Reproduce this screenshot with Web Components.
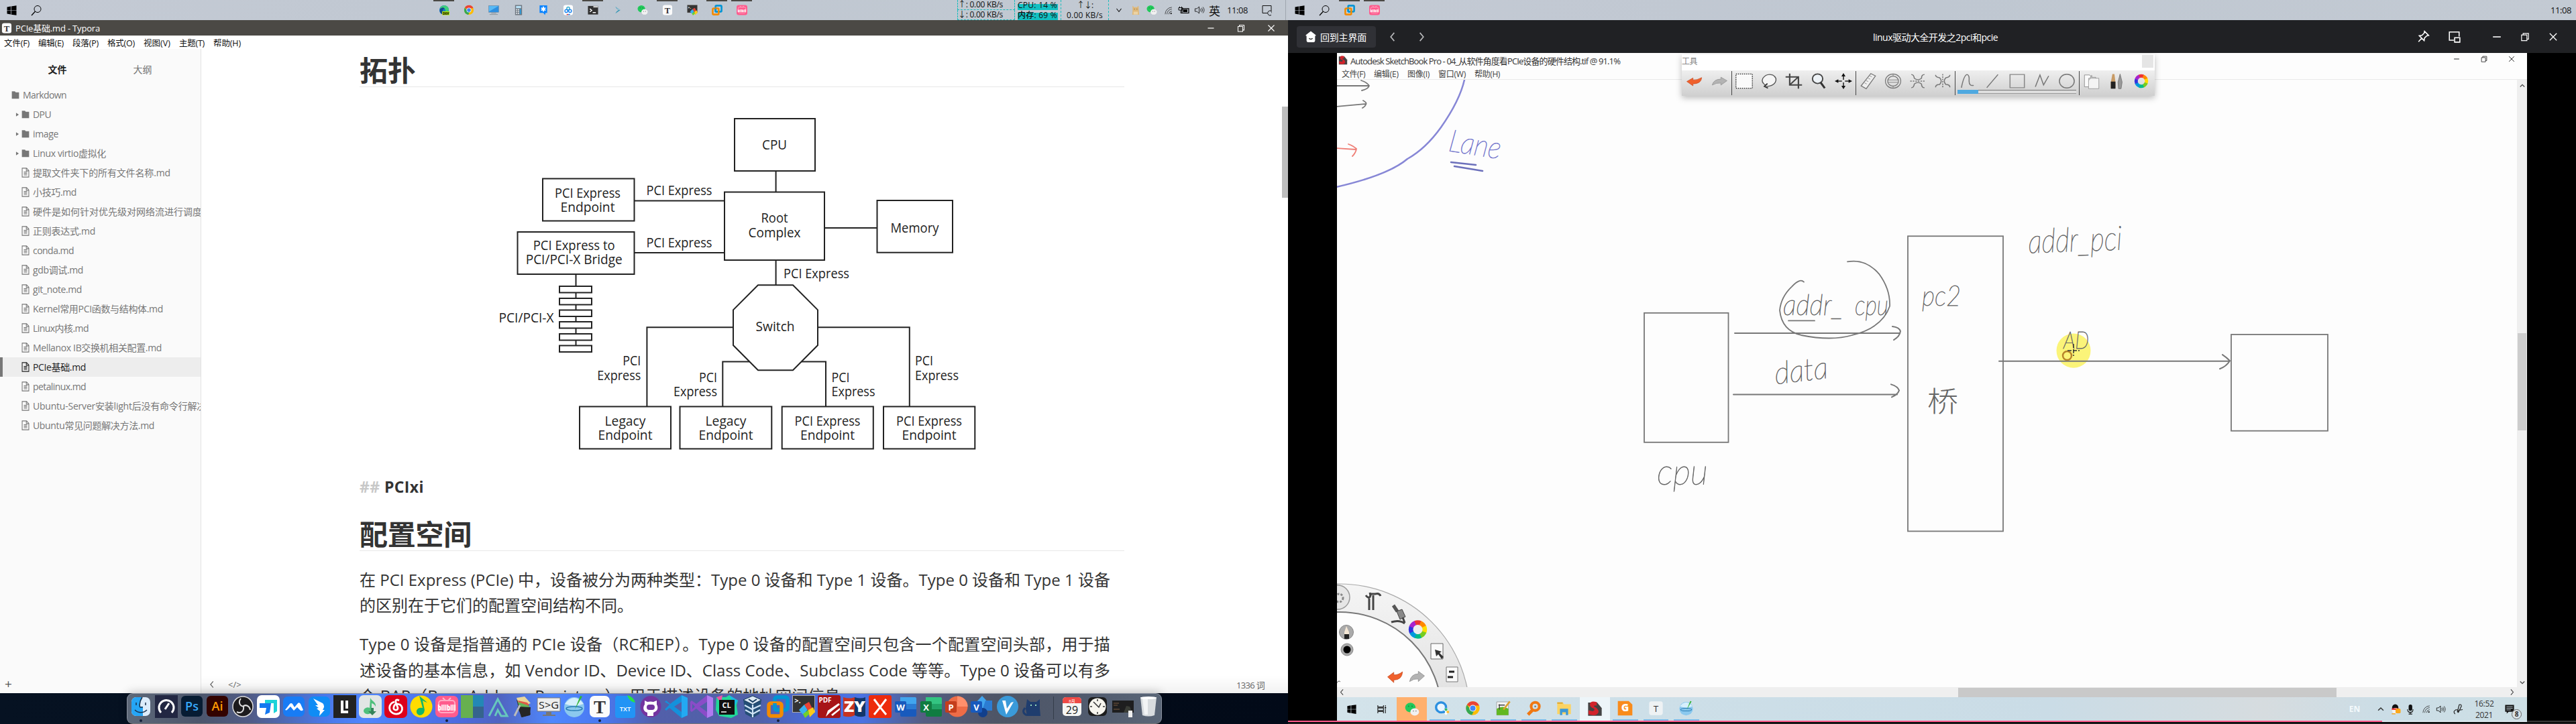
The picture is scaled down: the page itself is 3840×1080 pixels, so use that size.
<!DOCTYPE html>
<html lang="zh-CN">
<head>
<meta charset="utf-8">
<title>Desktop</title>
<style>
html,body{margin:0;padding:0;background:#000}
body{width:3840px;height:1080px;overflow:hidden;font-family:"Open Sans","Noto Sans CJK SC",sans-serif}
</style>
</head>
<body>
<desk-top></desk-top>
<script>
const UI='"Open Sans","Noto Sans CJK SC",sans-serif';
function define(name,html,after){
  customElements.define(name,class extends HTMLElement{
    connectedCallback(){
      if(this.shadowRoot)return;
      const t=document.createElement('template');
      t.innerHTML=typeof html==='function'?html(this):html;
      this.attachShadow({mode:'open'}).appendChild(t.content.cloneNode(true));
      if(after)after(this);
    }
  });
}

/* Inline text whose tracking is adjusted so that it takes w pixels. */
define('fit-text','<style>:host{display:inline-block;white-space:pre;flex:none}</style><span><slot></slot></span>',el=>{
  const w=+el.getAttribute('w');
  const n=[...el.textContent].length;
  const s=el.shadowRoot.querySelector('span');
  const nat=s.getBoundingClientRect().width;
  if(w&&nat){s.style.letterSpacing=((w-nat)/n)+'px';el.style.width=w+'px';}
});

const T=(x,y,s,f,t,e='')=>`<text x="${x}" y="${y}" font-size="${s}" fill="${f}" text-anchor="middle" ${e}>${t}</text>`;
const R=(f,x=2,y=1,w=30,h=32,r=7)=>`<rect x="${x}" y="${y}" width="${w}" height="${h}" rx="${r}" fill="${f}"/>`;
const ring=(cx,cy,r,w)=>{const c=['#e33','#f80','#fd0','#7c2','#0b8','#09d','#33d','#a2c'];let o='';for(let i=0;i<8;i++){const a=i*Math.PI/4-2,b=a+Math.PI/4+.05;o+=`<path d="M${cx+r*Math.cos(a)} ${cy+r*Math.sin(a)}A${r} ${r} 0 0 1 ${cx+r*Math.cos(b)} ${cy+r*Math.sin(b)}" stroke="${c[i]}" stroke-width="${w}" fill="none"/>`}return o};
const office=(c1,c2,c3,l)=>`<path d="M9 3h22a2 2 0 0 1 2 2v9H9z" fill="${c1}"/><path d="M9 13h24v9H9z" fill="${c2}"/><path d="M9 21h24v9a2 2 0 0 1-2 2H11a2 2 0 0 1-2-2z" fill="${c3}"/><rect x="1" y="9" width="17" height="17" rx="2" fill="${c3}"/>${T(9.5,22.5,13,'#fff',l,'font-weight="700"')}`;
const I={
win:'<path d="M3 7l11-2v11.3H3zM15.5 4.800L31 2.500v13.800H15.500zM3 17.700h11V29L3 27.200zM15.500 17.700H31v14L15.500 29.300z" fill="#000"/>',
find:'<circle cx="20" cy="13" r="10" fill="none" stroke="#000" stroke-width="2"/><path d="M13 20L2 32" stroke="#000" stroke-width="2.500"/>',
edge:'<circle cx="17" cy="17" r="15" fill="#1479c8"/><path d="M4 11C8 0 29-1 32 14c1 7-7 9-11 6 3-7-6-10-13-4z" fill="#3fd07b"/><path d="M5 13c7-7 14-4 14 1-8-2-9 8 1 15C9 34 0 24 5 13z" fill="#114a8b"/><rect x="11" y="21" width="23" height="12" fill="#b8f000"/>'+T(22.5,31,10,'#111','DEV','font-weight="800"'),
chrome:'<circle cx="17" cy="17" r="15" fill="#fbbc05"/><path d="M17 17L4 9.500A15 15 0 0 1 31 11H17z" fill="#ea4335"/><path d="M4 9.500a15 15 0 0 0 11 22.400L21 20l-10-2z" fill="#34a853"/><circle cx="17" cy="17" r="7.500" fill="#fff"/><circle cx="17" cy="17" r="6" fill="#4285f4"/>',
pc:'<rect x="1" y="3" width="32" height="21" fill="#2d8fe0" stroke="#7a8894"/><path d="M2 4h30L2 22z" fill="#57b9f5"/><path d="M9 27h16M4 31h26" stroke="#8a949c" stroke-width="2"/>',
calc:'<rect x="6" y="1" width="22" height="32" fill="#6e7780"/><rect x="9" y="4" width="16" height="7" fill="#b7e0f5"/><path d="M9 14h4v4H9zm6 0h4v4h-4zM9 20h4v4H9zm6 0h4v4h-4zM9 26h4v4H9zm6 0h4v4h-4z" fill="#dfe4e8"/><path d="M21 14h4v16h-4z" fill="#2e9ad8"/>',
star:'<path d="M5 2h24v24h-5l-2 7-5-7H5z" fill="#0a84ff"/><path d="M17 6v16M10 10l14 8M24 10l-14 8" stroke="#fff" stroke-width="4"/>',
baidu:R('#fff')+'<g fill="none" stroke-width="3"><circle cx="17" cy="12" r="4.500" stroke="#3ac"/><circle cx="11" cy="20" r="4.500" stroke="#28e"/><circle cx="23" cy="20" r="4.500" stroke="#28e"/></g><path d="M12 31h5" stroke="#e33" stroke-width="3"/><path d="M17 31h6" stroke="#28e" stroke-width="3"/>',
term:'<rect x="1" y="4" width="32" height="27" fill="#303030"/><path d="M18 4h15v5H18z" fill="#ccc"/><path d="M7 13l6 5-6 5M16 25h10" stroke="#fff" stroke-width="3" fill="none"/>',
arrowt:'<path d="M9 6l16 11L9 28l4-6 6-5-6-5z" fill="#3697b5"/><path d="M9 6l16 11-6 0z" fill="#9dc4d5"/>',
wechat:'<ellipse cx="13" cy="13" rx="12" ry="11" fill="#22c95b"/><ellipse cx="23" cy="23" rx="10" ry="8.500" fill="#f1f1f1"/><g fill="#178a3e"><circle cx="9" cy="10" r="1.500"/><circle cx="17" cy="10" r="1.500"/></g><g fill="#888"><circle cx="20" cy="21" r="1.300"/><circle cx="26" cy="21" r="1.300"/></g>',
typora:R('#fbfbfb')+T(17,27,27,'#333','T','font-family="Liberation Serif" font-weight="700"'),
vmware:'<rect x="12" y="3" width="19" height="19" rx="3" fill="none" stroke="#0095d3" stroke-width="5.500"/><rect x="3" y="12" width="19" height="19" rx="3" fill="none" stroke="#f38b00" stroke-width="5.500"/><path d="M12 12v7a3 3 0 0 0 3 3h3" stroke="#0095d3" stroke-width="5.500" fill="none"/>',
bili:R('#ff5c8d',0,1,34,32)+'<path d="M11 4l4 4M23 4l-4 4" stroke="#ffb6cc" stroke-width="2"/><rect x="5" y="8" width="24" height="18" rx="4" fill="none" stroke="#ffa9c3" stroke-width="2"/>'+T(17,23,12,'#fff','bilibili','font-weight="800" textLength="27" lengthAdjust="spacingAndGlyphs"'),
finder:R('#dcecfb',3,3,28,28)+'<path d="M10 3h9c-4 7-4 13-3 14h4v14H10a7 7 0 0 1-7-7V10a7 7 0 0 1 7-7z" fill="#25a5f5"/><path d="M10 11v4M24 11v4M8 22c5 5 13 5 18 0M19 3c-5 8-4 15-3 15h4" fill="none" stroke="#17314d" stroke-width="1.500"/>',
speed:'<rect y="0" width="34" height="34" fill="#222742"/><path d="M9 26a11 11 0 1 1 16 0" fill="none" stroke="#fff" stroke-width="3"/><path d="M15 21l6-9" stroke="#fff" stroke-width="3"/>',
ps:R('#071c33',1,1,32,31,6)+T(17,23,18,'#36a8fa','Ps','font-weight="600"'),
ai:R('#320300',1,1,32,31,6)+T(17,23,18,'#ff9a00','Ai','font-weight="600"'),
obs:'<circle cx="17" cy="17" r="15" fill="#1c1b1d" stroke="#ddd" stroke-width="1.500"/><g fill="none" stroke="#ddd" stroke-width="2"><path d="M14 5c-4 5-2 11 4 12M28 22c-1-6-7-9-11-5M8 25c6 3 11-1 10-8"/></g>',
todesk:R('#fff',0,0,34,34)+'<path d="M12 7h18v17l-5 3V12H12z" fill="#1cd3d8"/><path d="M4 12h17l-2 14-7 3 2-10H4z" fill="#1478f0"/>',
meet:R('#187cf5',1,2,32,30)+'<path d="M4 22l7-9q2-2 4 0l3 5 5-6q2-2 4 1l4 9q-3 3-6-1l-3-3-5 5-5-6-4 4q-3 3-4 0z" fill="#fff"/>',
ding:R('#108cf5',1,2,32,30)+'<path d="M8 5l14 7q4 4 0 10l3 0-8 9 1-7-5-4 3-1-5-4 4 0z" fill="#fff"/>',
li:'<rect y="0" width="34" height="34" fill="#222"/><path d="M13 8v17h9M20 8v12" stroke="#fff" stroke-width="4" fill="none"/>',
note:R('#e2e6e4',0,0,34,34)+'<path d="M17 4c2 5 9 6 8 13q-2-4-6-5v11a6 5 0 1 1-3-4z" fill="#4fc07c"/><path d="M18 19h4v5h4l-6 6-6-6h4z" fill="#35835a"/>',
netease:R('#dd001b',0,0,34,34)+'<path d="M22 8q-6-3-5 3l3 8q0 4-4 3t-1-7q2-3 8-1 6 4 2 11-5 5-12 2-7-4-5-11 2-5 7-6" fill="none" stroke="#fff" stroke-width="2.800"/>',
qqm:'<circle cx="17" cy="17" r="16.500" fill="#ffdc00"/><path d="M14 1l12 10q-4-1-7-3l3 14q-1 8-8 8-5-2-4-7 2-5 9-4z" fill="#12b56b"/>',
blocks:'<path d="M0 0h18v34H0z" fill="#67b04f"/><path d="M18 0h16v17H18z" fill="#2388b5"/><path d="M18 17h16v17H18z" fill="#35648d"/>',
tri:'<path d="M4 31L17 6l14 25h-9l-5-9-4 9" fill="none" stroke="#67c7bd" stroke-width="3"/>',
folder:'<path d="M7 7l17 4 4 18-14 4z" fill="#333"/><path d="M7 4l12-2 9 10-16 6z" fill="#e9d69b"/><path d="M9 8l14 3 3 4-14 3z" fill="#e05a45"/><path d="M9 10l17 6v3l-15-2z" fill="#64b55a"/><path d="M8 17l20 1-1 12-12 3z" fill="#252525"/><path d="M12 15L4 31" stroke="#bbb" stroke-width="3"/>',
sg:'<path d="M0 4h34v20H0z" fill="#eee" stroke="#777"/><path d="M13 25h8v4h6v2H8v-2h5z" fill="#777"/>'+T(17,20,15,'#222','S&gt;G','textLength="30" lengthAdjust="spacingAndGlyphs"'),
ball:'<circle cx="17" cy="18" r="15" fill="#8bc8ee"/><path d="M3 13q14-18 28 0-14 5-28 0z" fill="#d6effc"/><ellipse cx="17" cy="20" rx="12" ry="3" fill="none" stroke="#287cb4" stroke-width="1.500"/><path d="M18 21L26 1l3 1z" fill="#32b537"/>',
txt:'<path d="M7 1h15l10 10v19a4 4 0 0 1-4 4H6a4 4 0 0 1-4-4V5a4 4 0 0 1 5-4z" fill="#2294f5"/><path d="M20 0q9 2 12 11-9-1-12-11z" fill="#29e345"/>'+T(17,24,9.500,'#fff','TXT','font-weight="600"'),
github:'<ellipse cx="17" cy="17" rx="15.500" ry="16" fill="#7435a0"/><path d="M12 31v-5c-8-2-6-10-4-12V8l4 2q5-1 9 0l5-2v6c3 5 1 10-5 12v5" fill="#fff"/><rect x="11" y="14" width="12" height="8" rx="4" fill="#7435a0"/>',
code:'<path d="M25 0l9 4v26l-9 4L7 19l-5 4-2-2 7-7L0 10l2-2 6 5zM25 10l-11 7 11 8z" fill="#1491db" fill-rule="evenodd"/><path d="M25 0l9 4v26l-9 4z" fill="#23a9f2"/>',
vs:'<path d="M25 0l9 4v26l-9 4L9 20l-7 5-2-2V10l2-2 7 5zM25 10l-11 7 11 8zM3 13v8l4-4z" fill="#8a4cc8" fill-rule="evenodd"/><path d="M25 0l9 4v26l-9 4z" fill="#b07af0"/>',
clion:'<path d="M1 3l14 0 5-3 13 8-2 7 2 14-10 5-18-3L0 22z" fill="#20d898"/><path d="M20 0l13 8-5 8z" fill="#17b9e5"/><path d="M1 3l9-3-2 12z" fill="#e954a4"/><rect x="5" y="7" width="23" height="22" fill="#111"/><path d="M8 25h8" stroke="#fff" stroke-width="1.500"/>'+T(16,19,11,'#fff','CL','font-weight="700"'),
vbox:'<path d="M17 1l13 6-3 21-10 6L6 28 3 7z" fill="#244e76"/><path d="M17 1l13 6-13 7L3 7z" fill="#dce9f4" stroke="#163b5e"/><path d="M17 14v19M5 15l11 6 13-6M6 22l11 6 11-6" stroke="#cfe4f6" stroke-width="2.200" fill="none"/><path d="M11 6l6 4 6-4" stroke="#163b5e" fill="none" stroke-width="2"/>',
xterm:'<rect x=".5" y=".5" width="33" height="25" fill="#333" stroke="#aaa"/>'+T(8,12,11,'#fff','&gt;.','font-weight="700"')+'<path d="M10 22l8-8 5 8-7 7z" fill="#38b1f0"/><path d="M18 14l7-4 5 10-6 4z" fill="#e94335"/><path d="M16 28l8-6 3 5-8 7z" fill="#72d02a"/><path d="M24 22l7-4 3 7-8 8z" fill="#fbca1b"/>',
pdf:R('#a71417',0,0,34,34,3)+T(11,11,10,'#fff','PDF','font-weight="700"')+'<path d="M12 32l3-9L31 12l2 2-15 12zM20 29l13-10v3L22 31z" fill="#fff"/>',
zy:'<path d="M0 3q9 3 17 0v27q-8 4-17 1z" fill="#c73420"/><path d="M17 3q9 3 16 0v28q-8 3-16-1z" fill="#12376a"/>'+T(17,25,22,'#fff','ZY','font-weight="800" textLength="32" lengthAdjust="spacingAndGlyphs"'),
xmind:R('#ed2b0c',0,0,34,34,3)+'<path d="M8 6l9 12L26 6M8 29l9-11 9 11" stroke="#fff" stroke-width="3" fill="none"/>',
word:office('#41a5ee','#2b7cd3','#185abd','W'),
excel:office('#33c481','#21a366','#107c41','X'),
ppt:'<circle cx="18" cy="17" r="15.500" fill="#ed6c47"/><path d="M18 1.500a15.500 15.500 0 0 1 15.500 15.500H18z" fill="#ff8f6b"/><rect x="0" y="9" width="17" height="17" rx="2" fill="#c43e1c"/>'+T(8.500,22.500,13,'#fff','P','font-weight="700"'),
visio:'<path d="M17 1l11 12-11 12L6 13z" fill="#41a5ee"/><path d="M22 8h10v15H17z" fill="#2b7cd3"/><circle cx="18" cy="26" r="7" fill="#123f8c"/><rect x="0" y="9" width="17" height="17" rx="2" fill="#185abd"/>'+T(8.500,22.500,13,'#fff','V','font-weight="700"'),
vee:'<circle cx="17" cy="17" r="16" fill="#3a9ad9"/><path d="M9 8l5 0 2 12 6-9 4-1L15 29z" fill="#fff"/>',
cat:'<path d="M8 6l5 4h9l5-4v14l1 11H8L6 20z" fill="#1f3d6e"/><path d="M5 19q-6 7 3 11" stroke="#1f3d6e" stroke-width="3" fill="none"/><path d="M13 15h2M20 15h2" stroke="#9db" stroke-width="2"/>',
cal:R('#f6f6f4',3,3,28,28,5)+'<path d="M3 12V8a5 5 0 0 1 5-5h18a5 5 0 0 1 5 5v4z" fill="#ef4a45"/>'+T(17,10.500,6,'#fff','8月')+T(17,27.500,16,'#222','29'),
clock:R('#1d1d1d',3,3,28,28,6)+'<circle cx="17" cy="17" r="12.500" fill="#f7f5ee"/><g stroke="#333" stroke-width="1.500"><path d="M17 6v3M17 25v3M6 17h3M25 17h3" fill="none"/><path d="M11 10l8 8 3-6" fill="none"/></g>',
shot:'<rect x="1" y="8" width="32" height="18" fill="#1e1e1f"/><path d="M3 12h8M3 15h6M3 21h9" stroke="#7a5a40"/><path d="M18 26l4-10 5 1 4 9z" fill="#393c36"/><path d="M25 23h6v10h-6z" fill="#eee"/>',
trash:'<path d="M5 3h24l-3 27q-9 3-18 0z" fill="#d8dcdf"/><path d="M8 5h8v24H11z" fill="#f2f4f5"/><ellipse cx="17" cy="4" rx="12" ry="2" fill="#fff"/>',
chev:'<path d="M7 12l10 11 10-11" stroke="#111" stroke-width="2.500" fill="none"/>',
ocat:'<path d="M7 3l5 5h9l5-5 1 17 1 12H6l1-12z" fill="#dfb878"/><path d="M12 14h2M20 14h2" stroke="#543" stroke-width="2"/><path d="M10 22h14v9H10z" fill="#ecd3a4"/>',
wifi:'<g fill="none" stroke="#222" stroke-width="2"><path d="M5 32A27 27 0 0 1 31 5"/><path d="M12 32A20 20 0 0 1 31 12M19 32A13 13 0 0 1 31 20"/></g><circle cx="28" cy="29" r="3" fill="#111"/>',
batt:'<path d="M11 11h21v15H12z" fill="none" stroke="#000" stroke-width="2.500"/><path d="M15 14h13v9H15z"/><path d="M2 8h12v8H2zM5 4v4M11 4v4M8 16v10h5" fill="none" stroke="#000" stroke-width="2"/>',
spk:'<path d="M3 12h6l7-7v24l-7-7H3z" fill="none" stroke="#111" stroke-width="2"/><path d="M20 12q4 5 0 10M24 9q6 8 0 16M28 6q8 11 0 22" fill="none" stroke="#111" stroke-width="1.800"/>',
notif:'<path d="M4 3h26v22h-4v7l-7-7H4z" fill="none" stroke="#111" stroke-width="2"/><path d="M30 19a7 7 0 1 0 0 12" fill="#bfc7d1" stroke="#111" stroke-width="2"/>',
home:'<path d="M17 1l14 11v2h-2v14q0 4-4 4H9q-4 0-4-4V14H3v-2z" fill="#fff"/><path d="M12 21q5 5 10 0" stroke="#222" stroke-width="2.500" fill="none"/>',
lt:'<path d="M22 4L11 17l11 13" stroke="currentColor" stroke-width="3.500" fill="none"/>',
gt:'<path d="M12 4l11 13-11 13" stroke="currentColor" stroke-width="3.500" fill="none"/>',
up:'<path d="M6 22l11-11 11 11" stroke="currentColor" stroke-width="4" fill="none"/>',
dn:'<path d="M6 12l11 11 11-11" stroke="currentColor" stroke-width="4" fill="none"/>',
min:'<path d="M6 17h22" stroke="currentColor" stroke-width="3"/>',
rest:'<path d="M6 11h17v18H6zM11 11V6h17v18h-5" fill="none" stroke="currentColor" stroke-width="2.500"/>',
close:'<path d="M6 6l22 22M28 6L6 28" stroke="currentColor" stroke-width="2.800"/>',
pin:'<path d="M20 3l11 11-5 1-6 6-1 7L6 15l7-1 6-6zM12 22l-8 9" fill="none" stroke="currentColor" stroke-width="2.800"/>',
pip:'<path d="M16 27H4V5h26v12" fill="none" stroke="currentColor" stroke-width="2.800"/><path d="M18 20h14v12H18z" fill="none" stroke="currentColor" stroke-width="2.800"/>',
dir:'<path d="M4 3h11l3 4h12v25H4z" fill="#777"/>',
file:'<path d="M5 2h16l8 8v22H5zM20 2v9h9M11 15h12M11 20h12M11 25h12" fill="none" stroke="currentColor" stroke-width="2.600"/>',
caret:'<path d="M10 5l14 12-14 12z" fill="#777"/>',
sb:'<path d="M2 3h20l10 12v17H2z" fill="#444"/><path d="M21 2q-14-4-15 5 0 6 8 9 5 4-2 6l-9-2v9q18 6 22-5 0-8-10-12 0-4 6-2z" fill="#d1242c"/>',
undo:'<path d="M2 18l12-9v5q8 1 17-6-1 16-17 16v5z" fill="#f0602c" stroke="#c54a20"/>',
redo:'<path d="M32 16L20 7v5Q6 12 3 27q8-6 17-5v5z" fill="#b3b3b3" stroke="#8a8a8a"/>',
marq:'<rect x="1" y="2" width="32" height="30" fill="#fafafa" stroke="#222" stroke-width="1.800" stroke-dasharray="2 2"/>',
lasso:'<path d="M11 26Q1 20 5 11 12 0 24 4q10 6 5 16-5 8-17 8" fill="#f5f5f5" stroke="#555" stroke-width="1.800"/><path d="M14 22l-6 6 7 4" fill="none" stroke="#333" stroke-width="2.500"/>',
crop:'<path d="M9 1v24h24M1 8h25v25M26 8L9 25" fill="none" stroke="#444" stroke-width="2.800"/>',
mag:'<circle cx="15" cy="12" r="10" fill="#edf2f6" stroke="#444" stroke-width="2.500"/><path d="M21 20l8 12" stroke="#333" stroke-width="4"/>',
move:'<path d="M17 6v8M17 20v8M6 17h8M20 17h8" stroke="#222" stroke-width="2"/><path d="M17 0l4 7h-8zM17 34l4-7h-8zM0 17l7-4v8zM34 17l-7-4v8z" fill="#111"/>',
ruler:'<path d="M22 1l9 5-18 27-10-6z" fill="#efefef" stroke="#777" stroke-width="1.800"/><path d="M20 6l4 2M17 11l4 2M13 16l4 2M10 21l4 2" stroke="#777"/>',
ell:'<g fill="none" stroke="#777" stroke-width="1.600"><circle cx="17" cy="17" r="15"/><circle cx="17" cy="17" r="10.500"/></g><path d="M6 14.500h22M6 19.500h22M17 2v5M17 27v5" stroke="#888" stroke-width="1.600"/>',
symh:'<path d="M4 3q5 0 6 8 7 6 14 0 0-8 6-8M4 31q5 0 6-8 7-6 14 0 0 8 6 8" fill="none" stroke="#777" stroke-width="2"/><path d="M2 17h30" stroke="#777" stroke-width="2" stroke-dasharray="3 2"/>',
symv:'<path d="M3 4q0 5 8 6 6 7 0 14-8 0-8 6M31 4q0 5-8 6-6 7 0 14 8 0 8 6" fill="none" stroke="#777" stroke-width="2"/><path d="M17 2v30" stroke="#777" stroke-width="2" stroke-dasharray="3 2"/>',
curve:'<path d="M5 31Q10 4 16 3q5 1 4 14 0 11 9 9" fill="none" stroke="#777" stroke-width="2"/>',
line:'<path d="M6 31L28 3" stroke="#777" stroke-width="2"/>',
rect:'<path d="M3 3h28v28H3z" fill="none" stroke="#888" stroke-width="2"/>',
zig:'<path d="M4 29L13 4l7 21 10-19" fill="none" stroke="#777" stroke-width="2"/>',
circ:'<circle cx="17" cy="17" r="14.500" fill="none" stroke="#777" stroke-width="2"/>',
pages:'<path d="M3 4h10l4 5h8v20H3z" fill="#fbfbfb" stroke="#777"/><path d="M11 11h20v22H11z" fill="#f4f4f4" stroke="#888"/><path d="M10 18l6-14 3 2z" fill="#aaa"/>',
brush:'<path d="M9 2l4 0 2 18v12H6V20z" fill="#c89b65"/><path d="M6 18h9v15H6z" fill="#222"/><path d="M24 2l4 17-2 14h-5l-1-14z" fill="#999" stroke="#666"/>',
ring:ring(17,17,11,7),
task:'<path d="M4 4v6h18V4M4 30v-6h18v6M4 13h18v8H4zM28 4v4M28 16v14" fill="none" stroke="#222" stroke-width="2.500"/><circle cx="28" cy="12" r="2.500"/>',
qbl:'<circle cx="15" cy="15" r="11" fill="#eaf6ff" stroke="#2b8fe0" stroke-width="5"/><path d="M18 24l8-8 7 8-7 8z" fill="#fff"/><circle cx="21" cy="25" r="3" fill="#2b8fe0"/><circle cx="30" cy="25" r="3" fill="#fb3"/><circle cx="26" cy="20" r="3" fill="#3b6"/>',
npp:'<path d="M3 3h26v29H3z" fill="#f4f4f4" stroke="#888"/><path d="M3 18q13-8 26 0v14H3z" fill="#61b821"/><path d="M7 10h14M9 8v12" stroke="#444" stroke-width="2"/><path d="M32 2L18 20" stroke="#dca02e" stroke-width="4"/>',
omag:'<circle cx="20" cy="13" r="9" fill="none" stroke="#f07812" stroke-width="6"/><path d="M14 21L4 31" stroke="#f07812" stroke-width="7"/><circle cx="20" cy="13" r="2" fill="#777"/>',
expl:'<path d="M2 4h12l3 4h15v22H2z" fill="#fcd362"/><path d="M2 4h12v3H2z" fill="#e0a72f"/><path d="M8 32V18h18v14h-5v-6h-8v6z" fill="#3c98d5"/>',
gee:'<path d="M1 1h24l8 8v24H1z" fill="#f98b1b"/>'+T(17,24,23,'#fff','G','font-weight="800"'),
tee:R('#eef2f4',2,2,30,30,5)+T(17,25,20,'#333','T'),
qq:'<ellipse cx="16" cy="13" rx="10" ry="12" fill="#111"/><ellipse cx="17" cy="22" rx="11" ry="9" fill="#f3f3f3"/><path d="M5 14h22v5H5z" fill="#e33"/><rect x="17" y="15" width="16" height="15" rx="4" fill="#fba81a"/><path d="M5 30h12v3H5z" fill="#f6a21a"/>',
mic:'<rect x="11" y="2" width="13" height="20" rx="6" fill="#111"/><path d="M7 17q0 10 10 10t10-10M17 27v6M11 32h13" fill="none" stroke="#111" stroke-width="2.500"/>',
pen:'<path d="M8 32q-8-8 2-13 9-2 5 7L21 3q7-3 7 4l-9 19q-4 4 1-6l12-2" fill="none" stroke="#222" stroke-width="2.500"/>',
msg:'<path d="M3 3h28v22H14l-6 6v-6H3z" fill="#151515"/><path d="M7 9h20M7 14h20M7 19h14" stroke="#cfdfe7" stroke-width="1.800"/>'
};
define('pic-icon',el=>{
  const s=+el.getAttribute('s')||34,w=+el.getAttribute('w')||s;
  return `<style>:host{display:inline-flex;flex:none;width:${w}px;height:${s}px}svg{width:100%;height:100%;overflow:visible;font-family:${UI}}</style><svg viewBox="0 0 34 34" preserveAspectRatio="none">${I[el.getAttribute('k')]||''}</svg>`;
});
const ic=(k,s,w)=>`<pic-icon k="${k}" s="${s}"${w?` w="${w}"`:''}></pic-icon>`;
const gap=w=>`<i style="flex:none;width:${w}px"></i>`;
const cell=(w,c,x='')=>`<span class="c" style="width:${w}px;${x}">${c}</span>`;
const CELL='.c{flex:none;display:flex;align-items:center;justify-content:center;height:100%;box-sizing:border-box}';

define('net-meter',`<style>
:host{display:flex;gap:4px;height:30px;flex:none;font-size:12px;line-height:15px;color:#111}
div{display:flex;flex-direction:column;box-sizing:border-box}
.a{width:86px}.a span{height:15px;box-sizing:border-box;border:1px dashed #16bcbc;border-top:0;line-height:14px}
.b{width:60px;font-weight:500}.b span{height:15px}.b .m{background:linear-gradient(#c1c8d200 30%,#12c0c2 30%)}.b .p{background:linear-gradient(#c1c8d200 40%,#12c0c2 40%)}
.d{width:72px;border:1px dashed #16bcbc;border-width:0 1px;align-items:center;line-height:15px}
.d span{letter-spacing:-1px}
</style>
<div class="a"><span><fit-text w="67">↑: 0.00 KB/s</fit-text></span><span><fit-text w="67">↓: 0.00 KB/s</fit-text></span></div>
<div class="b"><span class="p"><fit-text w="59">CPU: 14 %</fit-text></span><span class="m"><fit-text w="59">内存: 69 %</fit-text></span></div>
<div class="d"><span>↑↓:</span><fit-text w="54">0.00 KB/s</fit-text></div>`);

define('top-bar',el=>{
  const main=el.hasAttribute('main');
  const run=(k,on)=>cell(37,ic(k,16),on?'border-top:2px solid #4b4945;padding-bottom:2px;border-image:linear-gradient(90deg,#0000 12%,#4b4945 12%,#4b4945 88%,#0000 88%) 2':'');
  return `<style>:host{display:flex;height:30px;width:1920px;box-sizing:border-box;align-items:center;background:linear-gradient(90deg,#c4cad4,#bfc7d1 50%,#c3cad3);font-size:13px;color:#111;overflow:hidden}${CELL}</style>`+
  cell(35,ic('win',17))+cell(38,ic('find',17))+
  (main?gap(570)+[['edge',1],['chrome'],['pc'],['calc'],['star'],['baidu'],['term',1],['arrowt'],['wechat'],['typora',1],['xterm'],['vmware',1],['bili',1]].map(a=>run(...a)).join('')+gap(303)+
   '<net-meter></net-meter>'+gap(2)+cell(26,ic('chev',14,12))+cell(24,ic('ocat',16))+cell(24,ic('wechat',16))+cell(24,ic('wifi',13))+cell(23,ic('batt',15,17))+cell(23,ic('spk',14,16))+cell(23,'英','font-size:17px')+gap(7)+'<fit-text w="31">11:08</fit-text>'+gap(19)+cell(19,ic('notif',17))+'<i style="margin-left:18px;width:1px;height:30px;background:#9fa5ae;flex:none"></i>'
   :run('vmware',1)+run('bili',1)+'<i style="flex:1"></i><fit-text w="31">11:08</fit-text>'+gap(7));
});

define('file-row',el=>{
  const k=el.getAttribute('kind'),sel=el.hasAttribute('on');
  const pad={root:16,dir:21,file:31}[k];
  return `<style>:host{display:flex;align-items:center;height:29px;box-sizing:border-box;padding-left:${sel?pad-4:pad}px;color:${sel?'#222':'#777'};font-size:14px;line-height:28px;white-space:nowrap;overflow:hidden;${sel?'background:#ededed;border-left:4px solid #777;':''}}
  .g{display:flex;align-items:center;flex:none;margin-right:4px}</style>
  <span class="g">${k==='dir'?ic('caret',8,10):''}${k==='file'?ic('file',15,14):ic('dir',13,14)}</span><slot></slot>`;
});

define('side-bar',()=>{
  const rows=[['root','Markdown',65],['dir','DPU',27],['dir','image',38],['dir','Linux virtio虚拟化',109],['file','提取文件夹下的所有文件名称.md',205],['file','小技巧.md',65],['file','硬件是如何针对优先级对网络流进行调度',252],['file','正则表达式.md',93],['file','conda.md',61],['file','gdb调试.md',75],['file','git_note.md',73],['file','Kernel常用PCI函数与结构体.md',194],['file','Linux内核.md',83],['file','Mellanox IB交换机相关配置.md',192],['file','PCIe基础.md',79,1],['file','petalinux.md',79],['file','Ubuntu-Server安装light后没有命令行解决',258],['file','Ubuntu常见问题解决方法.md',181]];
  return `<style>:host{display:flex;flex-direction:column;width:300px;box-sizing:border-box;border-right:1px solid #e2e2e2;background:#fafafa;overflow:hidden;flex:none}
  nav{display:flex;height:54px;padding-top:0;align-items:center;font-size:14px;color:#777;padding-left:22px;box-sizing:border-box;margin-top:3px;margin-bottom:-3px}
  nav span{width:127px;text-align:center}nav b{width:127px;text-align:center;color:#222}
  footer{margin-top:auto;height:26px;padding-left:7px;color:#555;font-size:19px;line-height:24px}</style>
  <nav><b>文件</b><span>大纲</span></nav>`+rows.map(r=>`<file-row kind="${r[0]}"${r[3]?' on':''}><fit-text w="${r[2]}">${r[1]}</fit-text></file-row>`).join('')+'<footer>+</footer>';
});

define('topology-diagram',()=>{
  const B=(x,y,x2,y2)=>`<rect x="${x}" y="${y}" width="${x2-x}" height="${y2-y}"/>`;
  const W={'PCI Express':98,'Endpoint':81,'Root':40,'Complex':78,'CPU':37,'Memory':72,'Switch':58,'PCI':27,'Express':65,'Legacy':61,'PCI/PCI-X':82,'PCI Express to':122,'PCI/PCI-X Bridge':144};
  const L=(x,y,t,a='middle')=>`<text x="${x}" y="${y+7}" text-anchor="${a}" textLength="${W[t]}" lengthAdjust="spacingAndGlyphs">${t}</text>`;
  let b='';[427,445,462.5,480,498,515.500].forEach((y,i)=>{b+=B(834,y,882,y+9.500);if(i)b+=`<path d="M858.500 ${y-8.300}V${y}"/>`});
  return `<style>:host{display:block}svg{display:block}g.l{fill:#fff;stroke:#222;stroke-width:2}g.t{fill:#222;font:20px ${UI}}</style>
  <svg width="1140" height="572" viewBox="536 130 1140 572"><g class="l">
  <path d="M1156.600 255V287M945 299.600H1080M945 377H1080M858.500 409V427M1229 340H1308M1156.600 388V426" />
  <path fill="none" d="M1093 488.200H964.400V607M1219 488.200H1355.800V607M1118 539.600H1077.300V607M1194 539.600H1231V607"/>
  ${B(1095,177,1215,255)+B(1080,286.500,1229,388)+B(809,266.500,945.500,329.500)+B(771.500,346,945.500,409)+B(1307.500,299,1420,376.700)+b+B(864,606.500,1000,669.500)+B(1013.500,606.500,1150.300,669.500)+B(1165.700,606.500,1301.800,669.500)+B(1317,606.500,1453.300,669.500)}
  <path d="M1130 425.300H1182L1219 462.400V515L1182 552.200H1130L1093 515V462.400z"/></g><g class="t">
  ${L(1154.500,216,'CPU')+L(1154.500,325,'Root')+L(1154.500,346.500,'Complex')+L(876,288,'PCI Express')+L(876,309,'Endpoint')+L(1012.500,284,'PCI Express')+L(855.700,366,'PCI Express to')+L(855.700,387,'PCI/PCI-X Bridge')+L(1012.500,362,'PCI Express')+L(784.500,474,'PCI/PCI-X')+L(1363.500,340,'Memory')+L(1217,408,'PCI Express')+L(1155.600,487.300,'Switch')}
  ${L(955.300,537.500,'PCI','end')+L(955.300,559.500,'Express','end')+L(1069,562.500,'PCI','end')+L(1069,584,'Express','end')+L(1239.500,562.500,'PCI','start')+L(1239.500,584,'Express','start')+L(1364,537.500,'PCI','start')+L(1364,559.500,'Express','start')}
  ${L(932,628,'Legacy')+L(932,649,'Endpoint')+L(1082,628,'Legacy')+L(1082,649,'Endpoint')+L(1233.500,628,'PCI Express')+L(1233.500,649,'Endpoint')+L(1385,628,'PCI Express')+L(1385,649,'Endpoint')}
  </g></svg>`;
});

define('doc-view',`<style>
:host{display:block;position:relative;flex:1;padding:6px 0 0 236px;background:#fff;overflow:hidden;color:#333;font-size:24px}
h2{margin:0;width:1140px;height:51px;box-sizing:border-box;border-bottom:1px solid #e8e8e8;font-size:42px;line-height:51px;font-weight:700}
h2 fit-text{vertical-align:top}
h4{margin:0;height:69px;font-size:23px;line-height:48px;font-weight:700}h4 span{color:#c8c8c8}
section{line-height:38.400px}section div{height:38.400px}
.one{margin-top:24px}.two{margin-top:19.500px}
.foot{position:absolute;left:0;right:0;bottom:0;height:26px;display:flex;align-items:center;font-size:13px;color:#666;padding:0 35px 0 10px;gap:18px;box-sizing:border-box;background:linear-gradient(#0000,#0000000d)}
.foot fit-text{margin-left:auto}
.bar{position:absolute;right:0;top:86px;width:9px;height:136px;background:#bdbdbd}
</style>
<h2><fit-text w="84">拓扑</fit-text></h2><topology-diagram></topology-diagram>
<h4><fit-text w="96"><span>##</span> PCIxi</fit-text></h4>
<h2><fit-text w="167">配置空间</fit-text></h2>
<section class="one"><div><fit-text w="1119">在 PCI Express (PCIe) 中，设备被分为两种类型：Type 0 设备和 Type 1 设备。Type 0 设备和 Type 1 设备</fit-text></div><div><fit-text w="408">的区别在于它们的配置空间结构不同。</fit-text></div></section>
<section class="two"><div><fit-text w="1119">Type 0 设备是指普通的 PCIe 设备（RC和EP）。Type 0 设备的配置空间只包含一个配置空间头部，用于描</fit-text></div><div><fit-text w="1119">述设备的基本信息，如 Vendor ID、Device ID、Class Code、Subclass Code 等等。Type 0 设备可以有多</fit-text></div><div><fit-text w="717">个 BAR（Base Address Registers），用于描述设备的地址空间信息</fit-text></div></section>
<div class="foot"><pic-icon k="lt" s="12"></pic-icon><span>&lt;/&gt;</span><fit-text w="42">1336 词</fit-text></div><div class="bar"></div>`);

define('typora-window',()=>`<style>
:host{display:flex;flex-direction:column;height:1004px;background:#fff;overflow:hidden}
header{height:23px;flex:none;background:#4b4945;color:#fff;display:flex;align-items:center;font-size:13px;padding-left:2px;gap:5px}
header .w{margin-left:auto;display:flex;gap:31px;padding-right:18px}
nav{height:20px;flex:none;display:flex;align-items:center;font-size:12.500px;color:#111;padding:1px 0 0 6px;box-sizing:border-box;gap:13px}
main{flex:1;display:flex;min-height:0}
</style><header>${ic('typora',16)}<fit-text w="126">PCIe基础.md - Typora</fit-text><span class="w">${ic('min',14)+ic('rest',14)+ic('close',14)}</span></header>
<nav>${[['文件(F)',38],['编辑(E)',38],['段落(P)',39],['格式(O)',41],['视图(V)',40],['主题(T)',38],['帮助(H)',41]].map(a=>`<fit-text w="${a[1]}">${a[0]}</fit-text>`).join('')}</nav>
<main><side-bar></side-bar><doc-view></doc-view></main>`);

define('dock-bar',()=>{
  const k='finder speed ps ai obs todesk meet ding li note netease qqm bili blocks tri folder sg ball typora txt github code vs clion vbox vmware xterm pdf zy xmind word excel ppt visio vee cat'.split(' ');
  const on=['finder','bili','typora','vmware'];
  const item=n=>`<span>${ic(n,34)}${on.includes(n)?'<b></b>':''}</span>`;
  return `<style>:host{display:flex;justify-content:flex-start;height:46px;background:linear-gradient(90deg,#061222,#020a18);padding-left:189px;position:relative}
  .d{display:flex;width:1543px;height:46px;box-sizing:border-box;padding-left:1px;border-radius:9px;border:1px solid #8b92a0;border-bottom-color:#777;box-shadow:0 -2px 14px #0003;background:linear-gradient(90deg,#5d6878 0,#4c566c 7%,#505c88 12%,#4a78e8 19%,#4f86ff 23%,#4c6be0 32%,#5064c0 36%,#4f88ff 41%,#4a78f0 46%,#525faa 51%,#5061a8 61%,#4a6bd8 66%,#4a73e4 71%,#555d82 77%,#4e5566 84%,#515b6e 93%,#5a6677 100%)}
  span{width:38px;flex:none;display:flex;flex-direction:column;align-items:center;padding-top:2px;box-sizing:border-box}
  b{width:4px;height:4px;border-radius:2px;background:#15203a;margin-top:2px}
  u{width:1px;height:34px;background:#343c49;margin:4px 8px 0 11px;flex:none}</style><div class="d">${k.map(item).join('')}<u></u>${['cal','clock','shot','trash'].map(item).join('')}</div>`;
});

define('sketch-canvas',()=>{
  const H=(x,y,w,s,t,e='')=>`<text x="${x}" y="${y}" textLength="${w}" lengthAdjust="spacingAndGlyphs" font-size="${s}" ${e}>${t}</text>`;
  const g=(k,x,y,s)=>`<svg x="${x-s/2}" y="${y-s/2}" width="${s}" height="${s}" viewBox="0 0 34 34">${I[k]}</svg>`;
  return `<style>:host{display:block;flex:1;background:#fdfdfd;overflow:hidden}svg{display:block}
  .k{fill:none;stroke:#777;stroke-width:1.800;stroke-linecap:round}.h{fill:#666;stroke:#666;stroke-width:.8;font-family:Lato,"Noto Sans CJK SC",sans-serif;font-weight:200;font-style:italic}</style>
  <svg width="1759" height="906" viewBox="1993 119 1759 906">
  <defs><linearGradient id="lg" x1="0" y1="0" x2="0" y2="1"><stop offset="0" stop-color="#f5f5f5"/><stop offset="1" stop-color="#c9c9c9"/></linearGradient></defs>
  <g transform="translate(0 -1.500) scale(1 1.005)">
  <circle cx="3091" cy="522" r="25.500" fill="#fbf479"/>
  <g class="k"><rect x="2451" y="466" width="125.500" height="192"/><rect x="2844" y="352" width="142" height="438"/><rect x="3326" y="498" width="144" height="143"/>
  <path stroke-width="2" d="M2586 496H2832M2821 486q10 1 12 7-1 8-10 13M2584 587H2828M2819 572q10 3 12 9-2 6-11 10M2980 537.500H3323M3313 528q6 4 11 9-5 8-15 12"/>
  <path d="M2689 420q-6-6-18 7-16 15-18 35 3 30 32 37 45 9 76 0 45-11 56-43 1-25-16-48-20-23-47-18M2666 477.500H2705"/></g>
  <g class="h">${H(2658,469,90,44,'addr_')+H(2765,469,50,42,'cpu')+H(2647,572,80,46,'data','transform="rotate(-7 2647 572)"')+H(3024,377,140,50,'addr_pci','transform="rotate(-2 3024 377)"')+H(2865,455,58,42,'pc2')+H(2873,612,46,42,'桥','font-style="normal" font-weight="200" stroke="none"')+H(2470,721,76,54,'cpu')+H(3076,519,38,36,'AD')}</g>
  </g>
  <g class="h" style="fill:#7476cc;stroke:#7476cc">${H(2158,225,78,46,'Lane','transform="rotate(9 2158 225)"')}</g>
  <g fill="none" stroke-linecap="round" stroke="#8787d6" stroke-width="2.500"><path d="M2183 119Q2176 150 2148 190 2125 222 2098 237 2070 261 1992 279"/><path d="M2163 242l37 4M2168 248l42 7" stroke="#6c70bb"/></g>
  <path class="k" d="M1992 128H2040M2029 120q9 3 12 8-2 5-11 7M1992 159L2036 155M2032 150q6 3 4 6-1 3-5 5"/><path class="k" style="stroke:#ef7f77" stroke-width="2" d="M1992 221L2021 223M2010 215q8 3 12 7-1 6-6 11"/>
  <circle cx="3081.500" cy="530.500" r="6.500" fill="none" stroke="#b8842a" stroke-width="2.500"/><path d="M3082 523h18M3091 513v18" stroke="#333" stroke-width="1.500" stroke-dasharray="6 2"/>
  <circle cx="1997" cy="1065" r="194" fill="url(#lg)" stroke="#aaa" stroke-width="1.200"/><circle cx="1997" cy="1065" r="152" fill="#fdfdfd" stroke="#777" stroke-width="2"/>
  <circle cx="1994" cy="891" r="18" fill="#e6e6e6" stroke="#999" stroke-width="1.500"/><circle cx="1996" cy="892" r="6" fill="none" stroke="#888" stroke-width="3" stroke-dasharray="3 2"/>
  <g stroke="#444" fill="none" stroke-width="3"><path d="M2047 888v22M2036 888q5 7 7 0l-1-4M2041 893v17M2041 886h9q6-2 8 3"/><path d="M2077 903l6 9" stroke-width="5" stroke="#555"/><path d="M2082 912l8-3 5 11-8 4z" fill="#888" stroke-width="1"/><path d="M2091 921l3 8M2074 928q12-4 20 2" stroke-width="3"/></g>
  ${g('ring',2113.500,939,32)}
  <path d="M2133 960h18v23h-18z" fill="#fafafa" stroke="#666"/><path d="M2139 969l10 3-3 2 6 6-3 3-5-7-3 3z" fill="#333"/><path d="M2156 995h17v22h-17z" fill="#fafafa" stroke="#777"/><path d="M2160 1002h8M2158 1010h8" stroke="#222" stroke-width="3"/>
  <circle cx="2007" cy="943" r="10.500" fill="#aaa" stroke="#888"/><path d="M2007 934l4 9v7h-7v-7z" fill="#f4e7d5"/><path d="M2004 946h7v7h-7z" fill="#222"/><circle cx="2008" cy="969" r="9" fill="#aaa" stroke="#888"/><circle cx="2008" cy="969" r="5.500"/>
  ${g('undo',2080,1009,26)+g('redo',2112,1009,26)}<path d="M1992 1020q3-6 6-3" stroke="#555" fill="none"/>
  </svg>`;
});

define('tool-palette',()=>{
  const s='<i class="s"></i>';
  const t=k=>cell(37,ic(k,k==='undo'||k==='redo'?20:24,k==='ring'?24:26));
  return `<style>:host{display:flex;flex-direction:column;width:705px;height:62px;background:linear-gradient(#fff 0 24px,#efefef 24px,#cfcfcf);box-shadow:0 3px 9px #0004}${CELL}
  .t{display:flex;justify-content:space-between;height:24px;font-size:12px;line-height:22px;color:#888}.t i{width:17px;height:19px;margin:1px 2px;background:#e5e5e5}
  .r{display:flex;height:38px;align-items:flex-start;padding-left:0}.r .c{height:32px}.s{width:1px;height:36px;background:#444;margin:1px -1px 0 0;flex:none}
  .m{display:flex;flex-direction:column}.m div{display:flex;height:29px}.m p{margin:0 4px;height:4px;border-top:1px solid #777;border-bottom:1px solid #999;background:#ddd}.m b{display:block;width:31px;height:6px;margin-top:-1px;background:#4fa9e0;border-radius:1px}</style>
  <div class="t"><fit-text w="23">工具</fit-text><i></i></div><div class="r">${t('undo')+t('redo')+s+['marq','lasso','crop','mag','move'].map(t).join('')+s+['ruler','ell','symh','symv'].map(t).join('')+s}<div class="m"><div>${['curve','line','rect','zig','circ'].map(t).join('')}</div><p><b></b></p></div>${s+['pages','brush','ring'].map(t).join('')}</div>`;
});

define('inner-taskbar',()=>{
  const u='border-bottom:2px solid #7cb8ea;margin:0 4px;';
  const c=(k,x='')=>cell(x.includes('margin')?37.500:45.500,ic(k,23),x);
  return `<style>:host{display:flex;height:35px;align-items:center;background:linear-gradient(90deg,#d3e3ea,#cddfe8 25%,#cadce6 60%,#d6dcdf 78%,#cbdde6 88%,#cddfe5);color:#333;font-size:12px;overflow:hidden}${CELL}.r{margin-left:auto;display:flex;align-items:center;height:100%}
  .tm{display:flex;flex-direction:column;line-height:17px;align-items:center;width:46px}.n{display:flex;width:34px;align-items:center;height:100%;position:relative}.n b{position:absolute;left:11px;top:18px;width:13px;height:13px;border:1px solid #666;border-radius:50%;background:#d9e2e6;font-size:10px;line-height:13px;text-align:center}</style>
  ${cell(44,ic('win',16))+cell(45,ic('task',16))+cell(45,ic('wechat',22),'background:#ffb06e')+c('qbl',u)+c('chrome',u)+c('npp',u)+c('omag',u)+c('expl',u)+c('sb','background:#edf5f9')+c('gee',u)+c('tee',u)+c('ball',u)}
  <div class="r">${cell(40,'<b style="color:#f4fafc">EN</b>','margin-right:8px')+cell(22,ic('up',12))+cell(22,ic('qq',16))+cell(22,ic('mic',16,14))+cell(24,ic('wifi',13))+cell(20,ic('spk',14,15))+cell(32,ic('pen',16))}<div class="tm"><fit-text w="29">16:52</fit-text><fit-text w="26">2021</fit-text></div>${gap(7)}<div class="n">${ic('msg',16)}<b>8</b></div></div>`;
});

define('sketch-app',()=>`<style>
:host{display:flex;flex-direction:column;width:1774px;height:996px;background:#fdfdfd;position:relative;flex:none;font-size:13px;color:#444}
.t{display:flex;align-items:center;height:22px;padding-left:2px;gap:4px;color:#333;flex:none}.t .w{margin-left:auto;padding-right:17px;display:flex;gap:29px;padding-bottom:4px}
.m{display:flex;align-items:center;padding-left:7px;gap:13px;border-bottom:1px solid #eaeaea;box-sizing:border-box;font-size:12px;height:18px;flex:none}
.b{display:flex;flex:1;min-height:0}.v{width:15px;background:#efefef;display:flex;flex-direction:column;align-items:center;justify-content:space-between;padding:4px 0 2px;box-sizing:border-box}.v i{width:13px;height:145px;background:#cdcdcd;margin-bottom:8px}
.h{height:15px;display:flex;align-items:center;background:#efefef;padding:0 17px 0 2px;flex:none}.h i{width:564px;height:14px;background:#c9c9c9;margin-left:913px;margin-right:auto}
tool-palette{position:absolute;left:514px;top:2px}
</style>
<div class="t">${ic('sb',14)}<fit-text w="402">Autodesk SketchBook Pro - 04_从软件角度看PCIe设备的硬件结构.tif @ 91.1%</fit-text><span class="w">${ic('min',12)+ic('rest',12)+ic('close',12)}</span></div>
<div class="m">${[['文件(F)',35],['编辑(E)',37],['图像(I)',33],['窗口(W)',41],['帮助(H)',38]].map(a=>`<fit-text w="${a[1]}">${a[0]}</fit-text>`).join('')}</div>
<div class="b"><sketch-canvas></sketch-canvas><div class="v">${ic('up',10)}<i></i>${ic('dn',10)}</div></div>
<div class="h">${ic('lt',11)}<i></i>${ic('gt',11)}</div><inner-taskbar></inner-taskbar><tool-palette></tool-palette>`);

define('video-player',()=>`<style>
:host{display:flex;flex-direction:column;height:1050px;background:#000}
header{height:49px;flex:none;background:#202124;display:flex;align-items:center;color:#fff;font-size:14px;padding-left:13px;box-sizing:border-box}
.home{display:flex;align-items:center;width:118px;height:32px;background:#303136;border-radius:4px;padding-left:12px;gap:5px;box-sizing:border-box}
.n{display:flex;gap:27px;padding-left:17px;color:#b9babc;width:723px;box-sizing:border-box}
.w{margin-left:auto;display:flex;align-items:center;padding-right:26px}
.stage{height:996px;padding-left:73px;display:flex}.p{height:2px;background:linear-gradient(90deg,#ff5c8d 1631px,#dce8ee 1631px 1847px,#3a3a3a 1847px)}.z{flex:1;background:#1c1c1e;border-top:1px solid #000}
</style><header><span class="home">${ic('home',18)}<fit-text w="69">回到主界面</fit-text></span><span class="n">${ic('lt',16)+ic('gt',16)}</span>${gap(18)}<fit-text w="186">linux驱动大全开发之2pci和pcie</fit-text>
<span class="w">${ic('pin',19)+gap(27)+ic('pip',19)+gap(45)+ic('min',18)+gap(25)+ic('rest',16)+gap(26)+ic('close',16)}</span></header>
<div class="stage"><sketch-app></sketch-app></div><div class="p"></div><div class="z"></div>`);

define('desk-top',`<style>:host{display:flex;width:3840px;height:1080px;overflow:hidden;font-family:${UI}}section{width:1920px;height:1080px;display:flex;flex-direction:column;overflow:hidden}</style>
<section><top-bar main></top-bar><typora-window></typora-window><dock-bar></dock-bar></section>
<section><top-bar></top-bar><video-player></video-player></section>`);
</script>
</body>
</html>
